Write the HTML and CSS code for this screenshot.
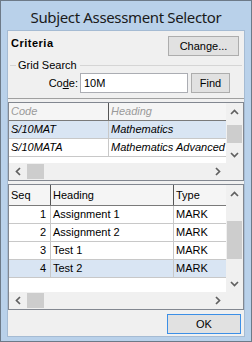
FILE: index.html
```html
<!DOCTYPE html>
<html lang="en">
<head>
    <meta charset="UTF-8">
    <title>Subject Assessment Selector</title>
    <link rel="stylesheet" href="styles.css">
</head>
<body>
    <div class="window">
        <div class="titlebar">Subject Assessment Selector</div>
        <div class="client">
            <div class="criteria">
                <span class="criteria-label">Criteria</span>
                <button class="btn btn-change">Change...</button>
            </div>
            <div class="group-head"><span>Grid Search</span></div>
            <div class="code-row">
                <label class="code-label">Co<u>d</u>e:</label>
                <input class="code-input" type="text" value="10M">
                <button class="btn btn-find">Find</button>
            </div>

            <!-- Subjects grid -->
            <div class="panel">
                <div class="grid grid-top">
                    <div class="grid-main">
                        <div class="row head head-muted">
                            <div class="cell c-code">Code</div>
                            <div class="cell c-heading">Heading</div>
                        </div>
                        <div class="row italic selected">
                            <div class="cell c-code">S/10MAT</div>
                            <div class="cell c-heading">Mathematics</div>
                        </div>
                        <div class="row italic">
                            <div class="cell c-code">S/10MATA</div>
                            <div class="cell c-heading">Mathematics Advanced</div>
                        </div>
                    </div>
                    <div class="vscroll">
                        <div class="sb-btn"><svg width="9" height="6" viewBox="0 0 9 6"><polyline points="1,5 4.5,1.5 8,5" class="chev"/></svg></div>
                        <div class="sb-track"><div class="thumb-v thumb-top"></div></div>
                        <div class="sb-btn"><svg width="9" height="6" viewBox="0 0 9 6"><polyline points="1,1 4.5,4.5 8,1" class="chev"/></svg></div>
                    </div>
                    <div class="hscroll">
                        <div class="sb-btn"><svg width="6" height="9" viewBox="0 0 6 9"><polyline points="5,1 1.5,4.5 5,8" class="chev"/></svg></div>
                        <div class="sb-track-h"><div class="thumb-h"></div></div>
                        <div class="sb-btn"><svg width="6" height="9" viewBox="0 0 6 9"><polyline points="1,1 4.5,4.5 1,8" class="chev"/></svg></div>
                    </div>
                    <div class="corner"></div>
                </div>
            </div>

            <!-- Assessments grid -->
            <div class="grid grid-bottom">
                <div class="grid-main">
                    <div class="row head head-tall">
                        <div class="cell c-seq">Seq</div>
                        <div class="cell c-title">Heading</div>
                        <div class="cell c-type">Type</div>
                    </div>
                    <div class="row">
                        <div class="cell c-seq num">1</div>
                        <div class="cell c-title">Assignment 1</div>
                        <div class="cell c-type">MARK</div>
                    </div>
                    <div class="row">
                        <div class="cell c-seq num">2</div>
                        <div class="cell c-title">Assignment 2</div>
                        <div class="cell c-type">MARK</div>
                    </div>
                    <div class="row">
                        <div class="cell c-seq num">3</div>
                        <div class="cell c-title">Test 1</div>
                        <div class="cell c-type">MARK</div>
                    </div>
                    <div class="row selected">
                        <div class="cell c-seq num">4</div>
                        <div class="cell c-title">Test 2</div>
                        <div class="cell c-type">MARK</div>
                    </div>
                </div>
                <div class="vscroll">
                    <div class="sb-btn"><svg width="9" height="6" viewBox="0 0 9 6"><polyline points="1,5 4.5,1.5 8,5" class="chev"/></svg></div>
                    <div class="sb-track"><div class="thumb-v thumb-bottom"></div></div>
                    <div class="sb-btn"><svg width="9" height="6" viewBox="0 0 9 6"><polyline points="1,1 4.5,4.5 8,1" class="chev"/></svg></div>
                </div>
                <div class="hscroll">
                    <div class="sb-btn"><svg width="6" height="9" viewBox="0 0 6 9"><polyline points="5,1 1.5,4.5 5,8" class="chev"/></svg></div>
                    <div class="sb-track-h"><div class="thumb-h"></div></div>
                    <div class="sb-btn"><svg width="6" height="9" viewBox="0 0 6 9"><polyline points="1,1 4.5,4.5 1,8" class="chev"/></svg></div>
                </div>
                <div class="corner"></div>
            </div>

            <div class="footer">
                <button class="btn btn-ok">OK</button>
            </div>
        </div>
    </div>
</body>
</html>
```

FILE: styles.css
```css
body {
    margin: 0;
    font-family: "Liberation Sans", Arial, sans-serif;
    font-size: 11px;
    color: #000;
}
.window {
    width: 252px;
    height: 342px;
    box-sizing: border-box;
    background: #b9d1ea;
    border: 1px solid #6d7a88;
    padding: 0 6px 4px 6px;
    display: flex;
    flex-direction: column;
}
.titlebar {
    height: 29px;
    box-sizing: border-box;
    padding-top: 4px;
    line-height: 25px;
    text-align: center;
    font-family: "Noto Sans", sans-serif;
    font-size: 15px;
    letter-spacing: -0.35px;
    color: #1a1a1a;
    white-space: nowrap;
}
.client {
    flex: 1;
    background: #f0f0f0;
    border: 1px solid #a5bbd3;
    display: flex;
    flex-direction: column;
}
.criteria {
    height: 27px;
    box-sizing: border-box;
    padding: 5px 5px 0 3px;
    display: flex;
    justify-content: space-between;
    align-items: flex-start;
}
.criteria-label {
    font-weight: bold;
    letter-spacing: 0.5px;
    line-height: 14px;
}
.btn {
    font-family: inherit;
    font-size: 11px;
    color: #000;
    background: #e1e1e1;
    border: 1px solid #adadad;
    padding: 0;
    height: 20px;
}
.btn-change {
    width: 71px;
}
.group-head {
    height: 14px;
    display: flex;
    align-items: center;
}
.group-head::before {
    content: "";
    width: 6px;
    margin-left: 2px;
    border-top: 1px solid #d5d5d5;
}
.group-head::after {
    content: "";
    flex: 1;
    margin-right: 2px;
    border-top: 1px solid #d5d5d5;
}
.group-head span {
    padding: 0 3px 0 2px;
    line-height: 14px;
}
.code-row {
    margin-top: 1px;
    height: 20px;
    display: flex;
    align-items: center;
}
.code-label {
    width: 70px;
    text-align: right;
    margin-right: 2px;
}
.code-input {
    width: 108px;
    height: 20px;
    box-sizing: border-box;
    border: 1px solid #abadb3;
    background: #fff;
    font-family: inherit;
    font-size: 11px;
    padding: 0 3px;
    margin: 0;
}
.btn-find {
    width: 39px;
    margin-left: 3px;
}
.panel {
    margin-top: 5px;
    border-top: 1px solid #a0a0a0;
    padding-top: 3px;
}
.grid {
    display: grid;
    grid-template-columns: 1fr 17px;
    border: 1px solid #828790;
    background: #fff;
}
.grid-top {
    grid-template-rows: 60px 17px;
}
.grid-bottom {
    margin-top: 3px;
    grid-template-rows: 107px 17px;
}
.grid-main {
    overflow: hidden;
}
.row {
    display: flex;
    height: 18px;
    box-sizing: border-box;
    border-bottom: 1px solid #c8c8c8;
    line-height: 17px;
    white-space: nowrap;
}
.row.selected {
    background: #d9e5f3;
}
.italic {
    font-style: italic;
}
.head {
    background: #f5f5f5;
    border-bottom: 1px solid #7a7a7a;
}
.head .cell {
    border-right-color: #555;
}
.head-muted {
    font-style: italic;
    color: #9a9a9a;
}
.head-tall {
    height: 21px;
    line-height: 20px;
}
.cell {
    box-sizing: border-box;
    border-right: 1px solid #c8c8c8;
    padding-left: 2px;
    overflow: hidden;
}
.c-code {
    width: 100px;
}
.c-heading {
    flex: 1;
    border-right: none;
}
.c-seq {
    width: 42px;
}
.c-seq.num {
    text-align: right;
    padding: 0 4px 0 0;
}
.c-title {
    width: 123px;
}
.c-type {
    flex: 1;
    border-right: none;
}
.vscroll {
    background: #f0f0f0;
    display: flex;
    flex-direction: column;
}
.sb-btn {
    width: 17px;
    height: 17px;
    flex: none;
    display: flex;
    align-items: center;
    justify-content: center;
}
.chev {
    fill: none;
    stroke: #606060;
    stroke-width: 1.7;
}
.sb-track {
    flex: 1;
}
.thumb-v {
    margin-left: 1px;
    width: 15px;
    background: #cdcdcd;
}
.thumb-top {
    margin-top: 5px;
    height: 18px;
}
.thumb-bottom {
    margin-top: 19px;
    height: 38px;
}
.hscroll {
    background: #f0f0f0;
    display: flex;
}
.sb-track-h {
    flex: 1;
}
.thumb-h {
    margin: 1px 0 0 1px;
    width: 17px;
    height: 15px;
    background: #cdcdcd;
}
.corner {
    background: #f0f0f0;
}
.footer {
    display: flex;
    justify-content: flex-end;
    padding: 4px 3px 0 0;
}
.btn-ok {
    width: 74px;
    border-color: #3c8fe6;
}
```
